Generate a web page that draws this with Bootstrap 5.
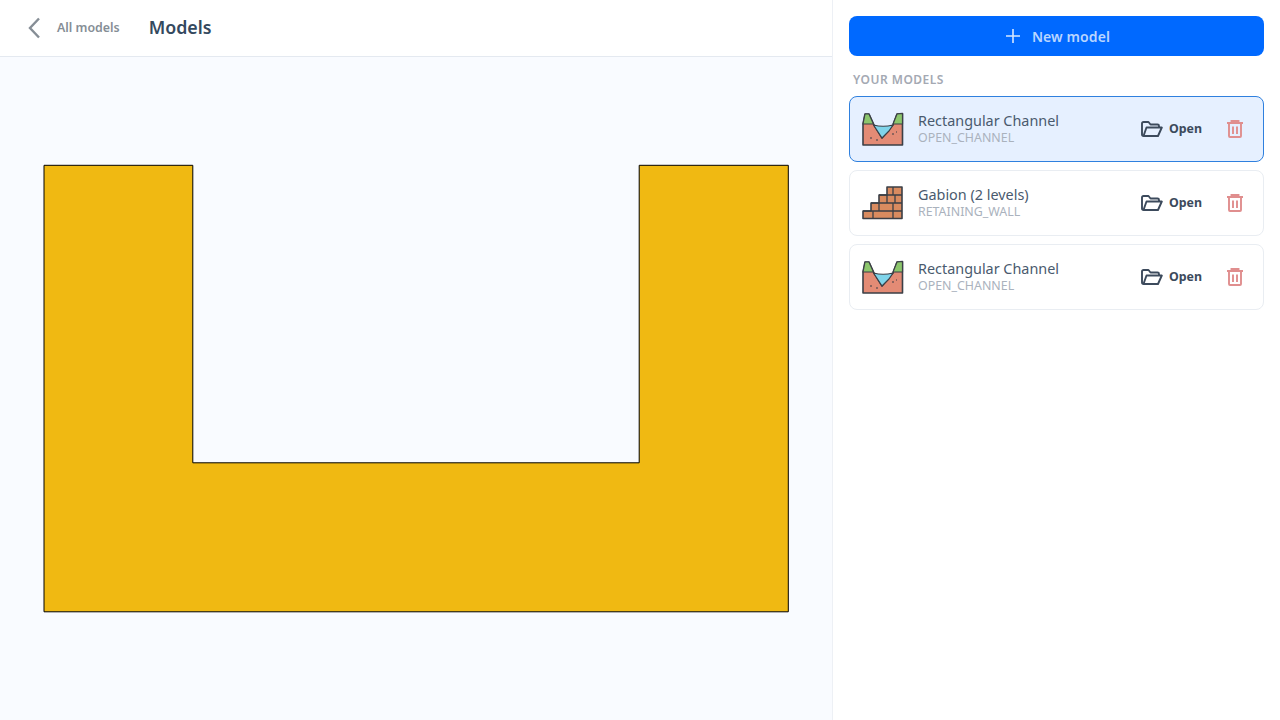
<!DOCTYPE html>
<html lang="en">
  <head>
    <meta charset="UTF-8" />
    <meta name="viewport" content="width=device-width, initial-scale=1.0" />
    <title>Models</title>
    <link
      rel="stylesheet"
      href="https://cdn.jsdelivr.net/npm/bootstrap@5.3.0/dist/css/bootstrap.min.css"
    />
    <style>
      body {
        font-family: "Noto Sans", sans-serif;
        background: #fff;
        height: 720px;
        overflow: hidden;
      }
      .main-pane {
        width: 832px;
        height: 720px;
      }
      .top-bar {
        height: 57px;
        padding-left: 24px;
        border-bottom: 1px solid #e4e9f0;
      }
      .back-link {
        color: #868e96;
        font-size: 12.4px;
        font-weight: 600;
        text-decoration: none;
        margin-left: 11px;
        margin-right: 29px;
      }
      .page-title {
        color: #34495e;
        font-size: 17.8px;
        font-weight: 600;
        margin: 0;
      }
      .canvas-area {
        background: #f9fbff;
      }
      .side-pane {
        width: 448px;
        height: 720px;
        border-left: 1px solid #edf0f5;
        padding: 16px 16px 0 16px;
      }
      .new-btn {
        height: 40px;
        padding-left: 14px;
        background: #0069ff;
        border: 0;
        border-radius: 8px;
        color: #b9d6ff;
        font-size: 14px;
        font-weight: 600;
        letter-spacing: .1px;
        gap: 11px;
      }
      .new-btn:hover {
        background: #0069ff;
        color: #b9d6ff;
      }
      .section-label {
        color: #a4a9b3;
        font-size: 12px;
        font-weight: 600;
        letter-spacing: .5px;
        line-height: 16px;
        margin: 16px 0 8px 4px;
      }
      .model-item {
        height: 66px;
        border: 1px solid #e9edf2;
        border-radius: 8px;
        padding: 0 20px 0 12px;
        margin-bottom: 8px;
      }
      .model-item.is-active {
        background: #e6f0ff;
        border-color: #2f80de;
      }
      .model-name {
        color: #4a5a6e;
        font-size: 14.4px;
        line-height: 18px;
      }
      .model-type {
        color: #aab2bd;
        font-size: 12.4px;
        line-height: 16px;
      }
      .model-text {
        margin-left: 14px;
      }
      .open-link {
        color: #3c4a5c;
        font-size: 12.4px;
        font-weight: 700;
        gap: 6px;
        margin-right: 25px;
      }
    </style>
  </head>
  <body>
    <svg width="0" height="0" class="d-block position-absolute">
      <defs>
        <symbol id="icon-channel" viewBox="0 0 42 34">
          <path d="M1 12 L3 2 L7 2 L12 13 L20 26 L31 13 L35 2 L40.5 1.5 V33 H1 Z" fill="#e38b75" stroke="#3b3f46" stroke-width="1.6" stroke-linejoin="round"/>
          <path d="M1 12 L3 2 L7 2 L11.5 12 Z" fill="#8cc66c" stroke="#3b3f46" stroke-width="1.2" stroke-linejoin="round"/>
          <path d="M40.5 1.5 L35 2 L31 12 L40.5 12 Z" fill="#8cc66c" stroke="#3b3f46" stroke-width="1.2" stroke-linejoin="round"/>
          <path d="M11.5 13 Q21 15.5 31 13 L27 19 L20 26 Z" fill="#7fd4ea" stroke="#3b3f46" stroke-width="1.2" stroke-linejoin="round"/>
          <path d="M8 26 h2 M14 28 h2 M30 22 h2 M34 20 h1" stroke="#3b3f46" stroke-width="1.2"/>
        </symbol>
        <symbol id="icon-wall" viewBox="0 0 42 34">
          <path d="M1 32.5 V25 H9 V17 H17 V9 H25 V1 H40 V32.5 Z" fill="#d98b5f" stroke="#3b3f46" stroke-width="1.6" stroke-linejoin="round"/>
          <path d="M1 25 H40 M9 17 H40 M17 9 H40 M31 1 V9 M25 9 V17 M33 9 V17 M17 17 V25 M31 17 V25 M11 25 V32.5 M31 25 V32.5" stroke="#3b3f46" stroke-width="1.3" fill="none"/>
        </symbol>
        <symbol id="icon-folder" viewBox="0 0 22 16">
          <path d="M2.5 15 H17 L20.8 6.5 H5.5 L2.5 15 Z M2.5 15 Q1 15 1 13.5 V2.5 Q1 1 2.5 1 H7.5 L9.5 3.5 H16.5 Q18 3.5 18 5 V6.5" fill="none" stroke="#3c4a5c" stroke-width="1.9" stroke-linejoin="round" stroke-linecap="round"/>
        </symbol>
        <symbol id="icon-trash" viewBox="0 0 16 18">
          <path d="M0 3 H16 M4.5 3 V1 H11.5 V3 M2 3 V16 Q2 17 3 17 H13 Q14 17 14 16 V3 M6 6.5 V14 M10 6.5 V14" fill="none" stroke="#e08e8e" stroke-width="1.9"/>
        </symbol>
      </defs>
    </svg>
    <div class="d-flex">
      <div class="main-pane d-flex flex-column">
        <div class="top-bar d-flex align-items-center">
          <svg width="22" height="22" viewBox="0 0 22 22">
            <path d="M15 1.5 L6 11 L15 20.5" fill="none" stroke="#868e96" stroke-width="2.4"/>
          </svg>
          <a href="#" class="back-link">All models</a>
          <h1 class="page-title">Models</h1>
        </div>
        <div class="canvas-area flex-grow-1 d-flex align-items-center justify-content-center">
          <svg width="746" height="449" viewBox="0 0 746 449">
            <path d="M1 1.3 H149.8 V298.8 H596.2 V1.3 H745.3 V447.8 H1 Z" fill="#f0b912" stroke="#000" stroke-width="1"/>
          </svg>
        </div>
      </div>
      <div class="side-pane">
        <button class="btn new-btn w-100 d-flex align-items-center justify-content-center">
          <svg width="16" height="16" viewBox="0 0 16 16">
            <path d="M8 1 V15 M1 8 H15" stroke="#d6e7ff" stroke-width="1.6"/>
          </svg>
          New model
        </button>
        <div class="section-label text-uppercase">Your models</div>
        <div id="model-list"></div>
      </div>
    </div>
    <script>
      const models = [
        { name: "Rectangular Channel", type: "OPEN_CHANNEL", icon: "icon-channel", active: true },
        { name: "Gabion (2 levels)", type: "RETAINING_WALL", icon: "icon-wall" },
        { name: "Rectangular Channel", type: "OPEN_CHANNEL", icon: "icon-channel" },
      ];

      document.getElementById("model-list").innerHTML = models
        .map(
          (m) => `
          <div class="model-item d-flex align-items-center ${m.active ? "is-active" : ""}">
            <svg width="42" height="34"><use href="#${m.icon}"></use></svg>
            <div class="model-text flex-grow-1">
              <div class="model-name">${m.name}</div>
              <div class="model-type">${m.type}</div>
            </div>
            <div class="open-link d-flex align-items-center">
              <svg width="22" height="16"><use href="#icon-folder"></use></svg>
              Open
            </div>
            <svg width="16" height="18"><use href="#icon-trash"></use></svg>
          </div>`
        )
        .join("");
    </script>
    <script src="https://cdn.jsdelivr.net/npm/bootstrap@5.3.0/dist/js/bootstrap.bundle.min.js"></script>
  </body>
</html>
